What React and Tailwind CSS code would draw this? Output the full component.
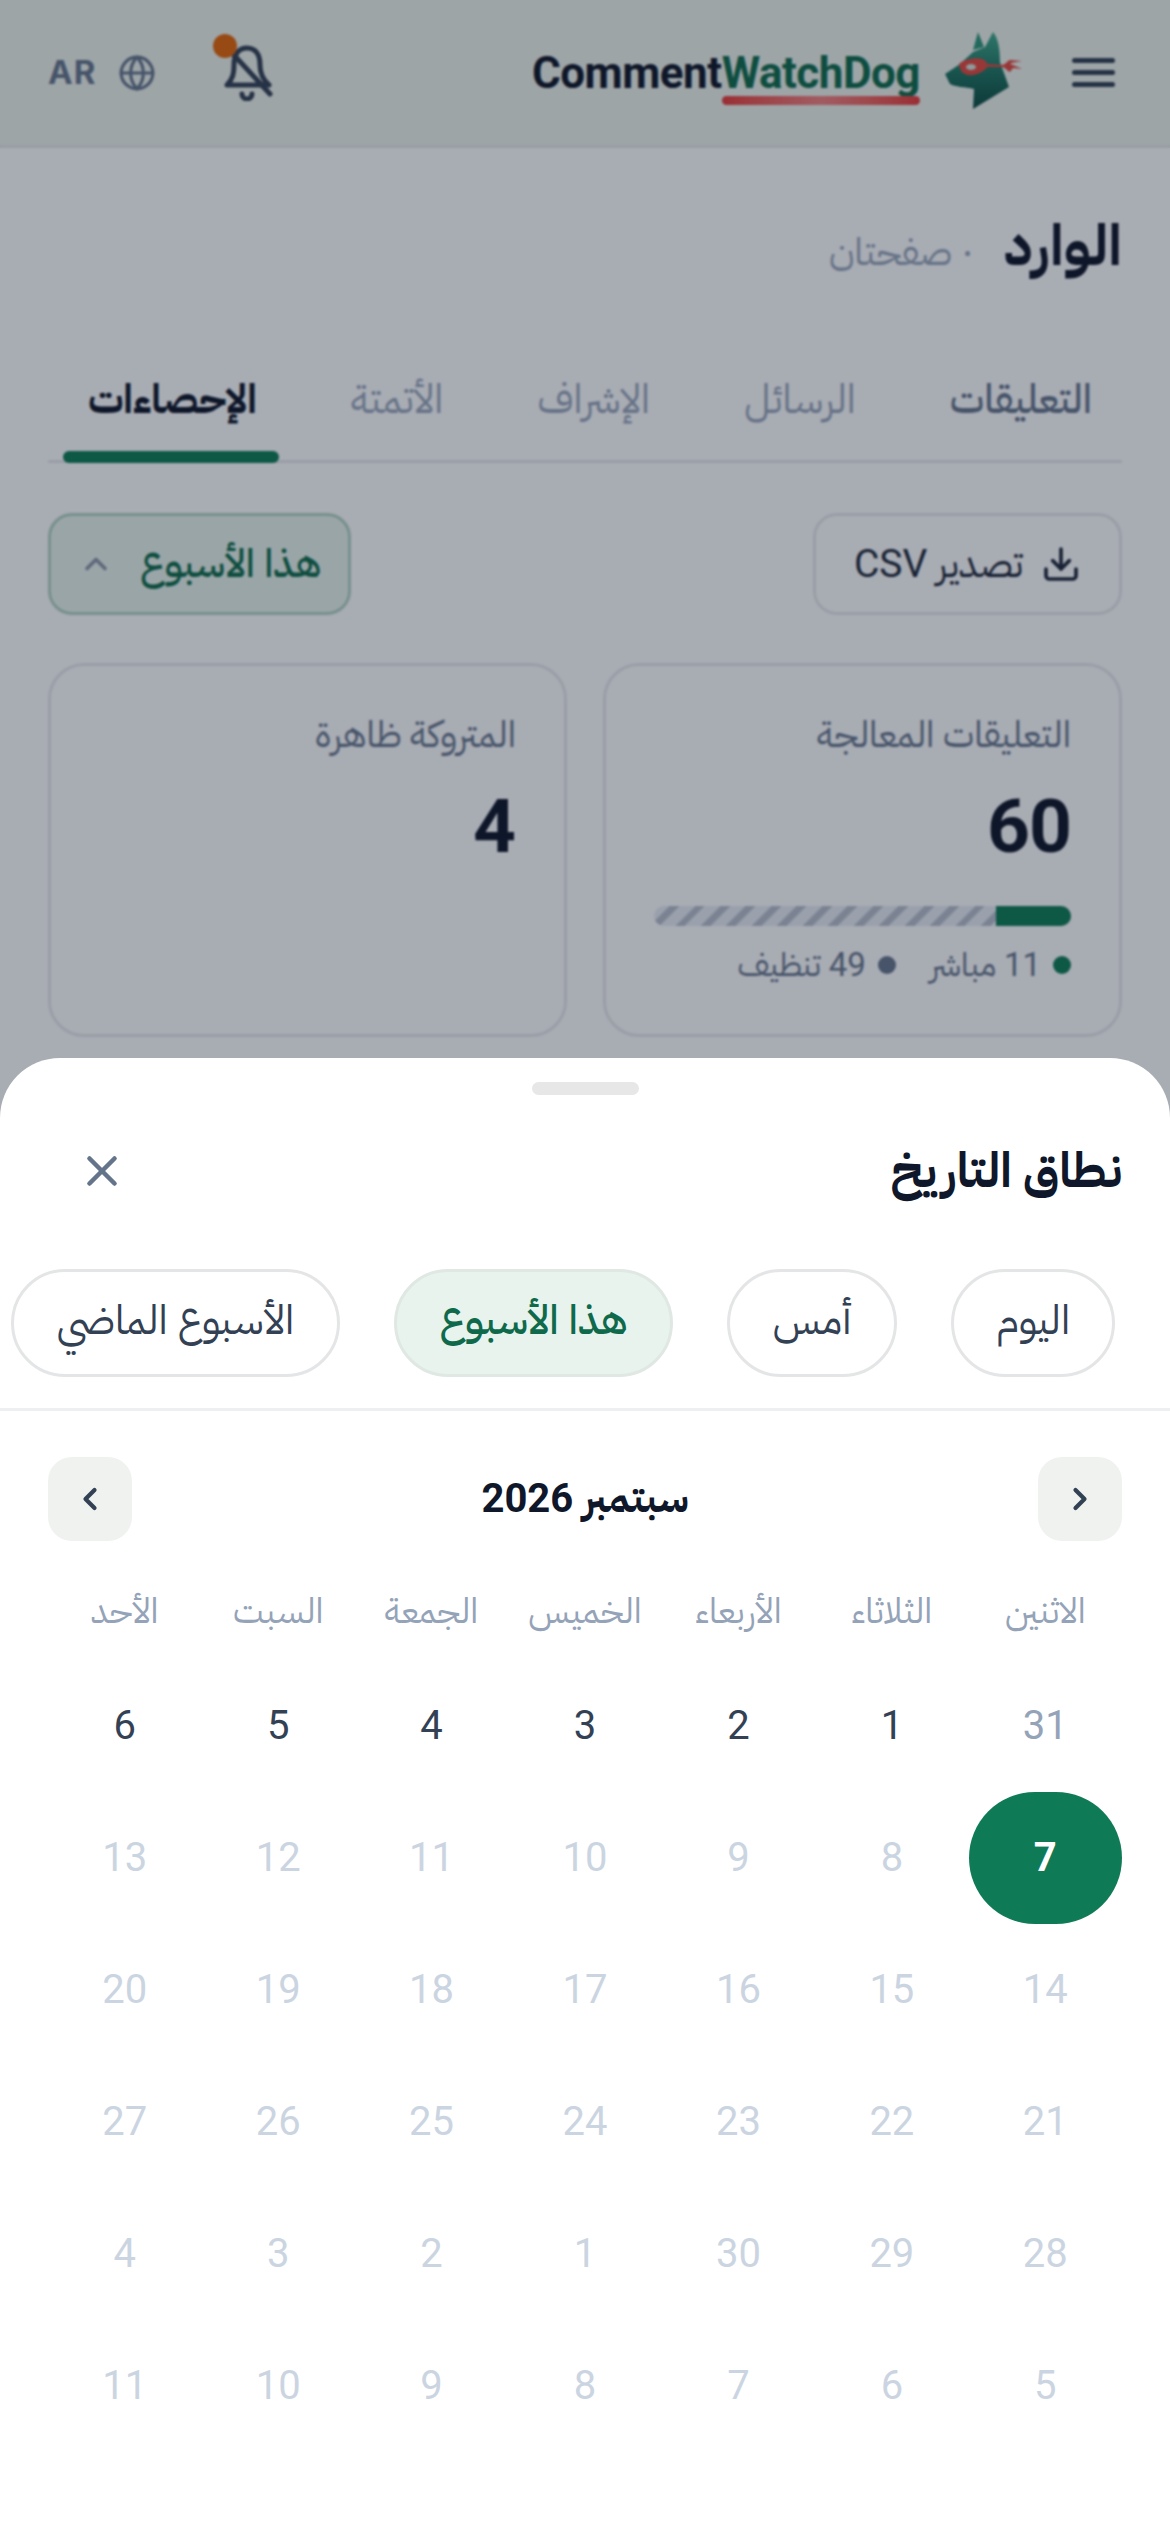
import React from "react";
import { Globe, Download, ChevronUp, ChevronLeft, ChevronRight, X } from "lucide-react";

const ar = { fontFamily: '"IBM Plex Sans Arabic","Noto Sans Arabic","Noto Sans","DejaVu Sans",sans-serif' };
const la = { fontFamily: '"Roboto",sans-serif' };

function Dog() {
  return (
    <svg width="78" height="77" viewBox="0 0 78 77" className="shrink-0">
      <defs>
        <linearGradient id="dg" x1="0" y1="0" x2="0" y2="1">
          <stop offset="0" stopColor="#3fa88c" />
          <stop offset="0.5" stopColor="#1f7563" />
          <stop offset="1" stopColor="#0c4a42" />
        </linearGradient>
      </defs>
      <path d="M33 0 L39 15 L28 18 Z" fill="#2d9478" />
      <path d="M48 0 C53 6 55 16 55 30 L64 55 L28 77 L29 57 C20 55 10 55 5 52 L0 42 L15 32 L28 20 L40 15 Z" fill="url(#dg)" />
      <path d="M14 32 C18 28 30 25 37 27 C40 28 42 30 42 32 L57 33 C60 33 62 29 65 28 L77 29 L66 31 C65 32 66 33 68 33 L77 37 L68 36 L65 40 C62 39 60 35 57 35 L42 35 C39 40 30 44 23 43 C19 42 15 40 14 32 Z" fill="#e0483f" />
      <ellipse cx="26" cy="35" rx="5" ry="3" fill="#cfe2da" />
    </svg>
  );
}

function Bell() {
  return (
    <svg width="50" height="56" viewBox="0 0 50 56" fill="none" stroke="#334155" strokeWidth="5" strokeLinecap="round" strokeLinejoin="round">
      <path d="M3 40 C9 34 10 28 10 20 C10 9 15 3 23 3 C31 3 36 9 36 20 C36 28 38 34 45 40 Z" />
      <path d="M9 9 L46 49" />
      <path d="M18 49 a5 5 0 0 0 10 0" />
    </svg>
  );
}

function Chip({ children, active, className = "" }) {
  return (
    <div className={`h-[108px] rounded-[54px] border-[3px] flex items-center justify-center shrink-0 text-[41px] pb-1 ${active ? "bg-[#e8f3ed] border-[#dfe8e3] text-[#0f6a4c] font-medium" : "bg-white border-[#e4e5e6] text-[#334155]"} ${className}`}>
      {children}
    </div>
  );
}

const days = [
  [31, 1, 2, 3, 4, 5, 6],
  [7, 8, 9, 10, 11, 12, 13],
  [14, 15, 16, 17, 18, 19, 20],
  [21, 22, 23, 24, 25, 26, 27],
  [28, 29, 30, 1, 2, 3, 4],
  [5, 6, 7, 8, 9, 10, 11],
];
const weekdays = ["الاثنين", "الثلاثاء", "الأربعاء", "الخميس", "الجمعة", "السبت", "الأحد"];

export default function App() {
  return (
    <div dir="rtl" style={ar} className="relative w-[1170px] h-[2532px] overflow-hidden bg-[#f8f9fb]">
      {/* page */}
      <header className="h-[148px] bg-[#e8eee9] border-b-[3px] border-[#e0e3e3] flex items-center justify-between pr-[55px] pl-[48px]">
        <div className="flex items-center">
          <svg width="43" height="29" viewBox="0 0 43 29" fill="#334155" className="shrink-0">
            <rect x="0" y="0" width="43" height="5" rx="2.5" />
            <rect x="0" y="12" width="43" height="5" rx="2.5" />
            <rect x="0" y="24" width="43" height="5" rx="2.5" />
          </svg>
          <div className="mr-[49px] mt-[-5px]"><Dog /></div>
          <div dir="ltr" style={la} className="mr-[25px] text-[44px] font-bold tracking-[-0.5px] leading-none text-[#0f172a]">
            <span>Comment</span><span className="relative inline-block text-[#0f6a4c]">WatchDog
              <span className="absolute left-0 right-0 top-[45px] h-[9px] rounded-full bg-gradient-to-r from-[#e23a3a] via-[#ec8080] to-[#e23a3a]" />
            </span>
          </div>
        </div>
        <div dir="ltr" className="flex items-center">
          <span className="text-[33px] font-bold text-[#64748b] tracking-[1px]" style={{ fontFamily: '"Inter",sans-serif' }}>AR</span>
          <Globe size={38} strokeWidth={2} className="ml-[22px] text-[#64748b]" />
          <div className="relative ml-[68px] mt-[1px]">
            <Bell />
            <div className="absolute -top-[11px] -left-[11px] w-6 h-6 rounded-full bg-[#e0640a]" />
          </div>
        </div>
      </header>

      <main className="px-[48px]">
        <div className="flex items-baseline gap-[30px] pt-[56px] h-[180px]">
          <h1 className="text-[57px] font-bold text-[#0f172a] leading-[84px]">الوارد</h1>
          <span className="text-[38.5px] text-[#94a3b8]">· صفحتان</span>
        </div>
        <div className="relative flex justify-between h-[135px] pr-[30px] pl-[40px] pt-[42px] border-b-[3px] border-[#e2e5e8] text-[40px] text-[#94a3b8]">
          <span className="text-[#64748b] font-medium">التعليقات</span>
          <span>الرسائل</span>
          <span>الإشراف</span>
          <span>الأتمتة</span>
          <span className="text-[#0f172a] font-bold">الإحصاءات</span>
          <div className="absolute left-[15px] bottom-[-3px] w-[216px] h-[12px] rounded-full bg-[#0f7a56]" />
        </div>

        <div className="flex justify-between mt-[50px]">
          <div className="h-[102px] w-[309px] rounded-[24px] border-[3px] border-[#e2e5e8] flex items-center justify-center gap-[18px] text-[39px] text-[#1e293b]">
            <Download size={40} strokeWidth={2.2} />
            <span>تصدير <span style={la}>CSV</span></span>
          </div>
          <div className="h-[102px] w-[303px] rounded-[24px] border-[3px] border-[#aed0c2] bg-[#e3efe9] flex items-center justify-center gap-[26px] text-[39.5px] text-[#0f6a4c] font-medium">
            <span>هذا الأسبوع</span>
            <ChevronUp size={36} strokeWidth={2.4} className="text-[#8692a6]" />
          </div>
        </div>

        <div className="grid grid-cols-2 gap-[36px] mt-[48px]">
          <div className="h-[374px] rounded-[36px] border-[3px] border-[#e2e5e8] px-[48px] pt-[42px]">
            <div className="text-[37px] text-[#64748b] leading-[54px]">التعليقات المعالجة</div>
            <div style={la} className="text-[75px] font-bold text-[#0f172a] leading-[80px] mt-[24px] tracking-[-1px]">60</div>
            <div className="flex h-[20px] rounded-full overflow-hidden mt-[40px] bg-[repeating-linear-gradient(135deg,#e2e8f0_0_11px,#b4bbc9_11px_18px)]">
              <div className="w-[75px] bg-[#0f7a56] h-full" />
            </div>
            <div className="flex items-center gap-[34px] mt-[14px] text-[33px] text-[#64748b]">
              <span className="flex items-center gap-[12px]"><i className="w-[18px] h-[18px] rounded-full bg-[#0f7a56]" /><span><span style={la}>11</span> مباشر</span></span>
              <span className="flex items-center gap-[12px]"><i className="w-[18px] h-[18px] rounded-full bg-[#64748b]" /><span><span style={la}>49</span> تنظيف</span></span>
            </div>
          </div>
          <div className="h-[374px] rounded-[36px] border-[3px] border-[#e2e5e8] px-[48px] pt-[42px]">
            <div className="text-[37px] text-[#64748b] leading-[54px]">المتروكة ظاهرة</div>
            <div style={la} className="text-[75px] font-bold text-[#0f172a] leading-[80px] mt-[24px]">4</div>
          </div>
        </div>
      </main>

      {/* scrim */}
      <div className="absolute inset-0 bg-[#0f172a]/[0.34] backdrop-blur-[1px]" />

      {/* sheet */}
      <div className="absolute inset-x-0 top-[1058px] bottom-0 bg-white rounded-t-[60px]">
        <div className="w-[107px] h-[13px] rounded-full bg-[#e6e7e6] mx-auto mt-[24px]" />
        <div className="flex items-center justify-between pr-[48px] pl-[77px] h-[110px] mt-[21px]">
          <h2 className="text-[48px] font-bold text-[#0f172a]">نطاق التاريخ</h2>
          <X size={50} strokeWidth={2.2} className="text-[#64748b]" />
        </div>
        <div className="flex gap-[54px] pr-[55px] mt-[43px] pb-[31px] border-b-[3px] border-[#eeeff0] overflow-hidden">
          <Chip className="w-[164px]">اليوم</Chip>
          <Chip className="w-[170px]">أمس</Chip>
          <Chip active className="w-[279px]">هذا الأسبوع</Chip>
          <Chip className="w-[329px]">الأسبوع الماضي</Chip>
        </div>
        <div className="flex items-center justify-between px-[48px] mt-[46px]">
          <div className="w-[84px] h-[84px] rounded-[24px] bg-[#eff2ef] flex items-center justify-center text-[#334155]"><ChevronRight size={36} strokeWidth={2.8} /></div>
          <div className="text-[40px] font-bold text-[#0f172a]">سبتمبر <span style={la}>2026</span></div>
          <div className="w-[84px] h-[84px] rounded-[24px] bg-[#eff2ef] flex items-center justify-center text-[#334155]"><ChevronLeft size={36} strokeWidth={2.8} /></div>
        </div>
        <div className="grid grid-cols-7 mx-[48px] mt-[44px] h-[50px] items-center text-center text-[35.5px] text-[#94a3b8]">
          {weekdays.map((d) => <div key={d}>{d}</div>)}
        </div>
        <div style={la} className="grid grid-cols-7 mx-[48px] mt-[25px]">
          {days.flat().map((d, i) => {
            const selected = i === 7;
            const inMonth = i >= 1 && i <= 6;
            return (
              <div key={i} className={`h-[132px] rounded-[66px] flex items-center justify-center text-[40px] ${selected ? "bg-[#0f7a56] text-white font-bold" : inMonth ? "text-[#334155]" : i === 0 ? "text-[#94a3b8]" : "text-[#cbd5e1]"}`}>{d}</div>
            );
          })}
        </div>
      </div>
    </div>
  );
}
